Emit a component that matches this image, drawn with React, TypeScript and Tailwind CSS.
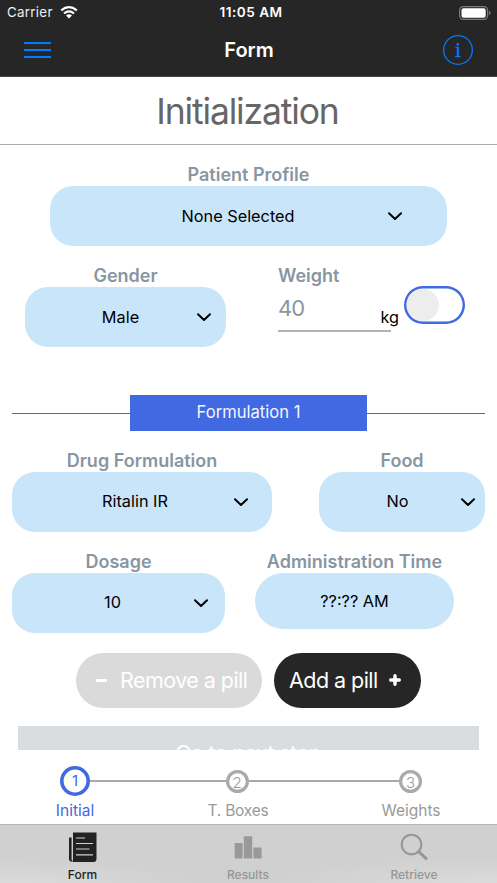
import type { ReactNode } from "react";

function Chevron({ className }: { className: string }) {
  return (
    <svg className={`absolute h-2 w-[14px] ${className}`} viewBox="0 0 14 8" fill="none" stroke="#000" strokeWidth="2" strokeLinecap="round" strokeLinejoin="round">
      <path d="M1 1.2 L7 6.9 L13 1.2" />
    </svg>
  );
}

function Label({ children }: { children: ReactNode }) {
  return <div className="h-[25px] whitespace-nowrap text-center text-[18px] leading-[27px] font-semibold text-[#8896a2]">{children}</div>;
}

function Select({ value, width, pad, chevron, leading = "leading-[60px]" }: { value: string; width: string; pad: string; chevron: string; leading?: string }) {
  return (
    <div className={`relative h-[60px] rounded-[23px] bg-[#c9e5fa] text-center text-[16.3px] text-black ${leading} ${width} ${pad}`}>
      {value}
      <Chevron className={`top-[26px] ${chevron}`} />
    </div>
  );
}

function StatusBar() {
  return (
    <div className="flex h-[25px] items-center justify-between pl-[7px] pr-[6px]">
      <div className="flex w-[90px] items-center gap-[7px] text-[13.3px] text-[#f0f0f0]">
        <span className="tracking-[0.3px]">Carrier</span>
        <svg className="h-[13px] w-[18px]" viewBox="0 0 18 13" fill="none" stroke="#fff" strokeWidth="2.2">
          <path d="M1.2 4.4 Q9 -2 16.8 4.4" />
          <path d="M4 7.5 Q9 3.3 14 7.5" />
          <path d="M6 9.5 Q9 7.1 12 9.5 L9 12.6 Z" fill="#fff" stroke="none" />
        </svg>
      </div>
      <div className="pl-1 text-[13.6px] font-semibold tracking-[0.5px] text-white">11:05 AM</div>
      <div className="flex w-[90px] justify-end">
        <svg className="h-[14px] w-8" viewBox="0 0 32 14">
          <rect x="0.6" y="0.6" width="28" height="12.8" rx="3.6" fill="none" stroke="#7b7b7b" strokeWidth="1.2" />
          <rect x="2.5" y="2.3" width="24.2" height="9.4" rx="2" fill="#fff" />
          <path d="M30 4.8 Q31.6 5.4 31.6 7 Q31.6 8.6 30 9.2 Z" fill="#7b7b7b" />
        </svg>
      </div>
    </div>
  );
}

function NavBar() {
  return (
    <div className="flex h-[50px] items-center justify-between pl-6 pr-6">
      <div className="flex w-[27px] flex-col gap-[5px]">
        <div className="h-[2px] bg-[#007aff]" />
        <div className="h-[2px] bg-[#007aff]" />
        <div className="h-[2px] bg-[#007aff]" />
      </div>
      <div className="pl-1 text-[20px] font-semibold text-white">Form</div>
      <div className="flex h-[30px] w-[30px] items-center justify-center rounded-full font-['Liberation_Serif',serif] text-[22px] leading-none text-[#007aff] shadow-[inset_0_0_0_1.3px_#007aff] [-webkit-text-stroke:0.3px_#007aff]">
        i
      </div>
    </div>
  );
}

function Stepper() {
  return (
    <div className="h-[74px] bg-white pt-4">
      <div className="flex h-[30px] items-center pl-[60px]">
        <div className="flex h-[30px] w-[30px] items-center justify-center rounded-full text-[15px] text-[#4169e1] shadow-[inset_0_0_0_3.6px_#4169e1]">1</div>
        <div className="h-[2px] w-[135.5px] bg-[#aaa]" />
        <div className="flex h-[23px] w-[23px] items-center justify-center rounded-full pt-[4px] text-[15px] font-light tracking-[-0.3px] text-[#999] shadow-[inset_0_0_0_3.2px_#aaa]">2</div>
        <div className="h-[2px] w-[150.5px] bg-[#aaa]" />
        <div className="flex h-[23px] w-[23px] items-center justify-center rounded-full pt-[4px] text-[15px] font-light tracking-[-0.3px] text-[#999] shadow-[inset_0_0_0_3.2px_#aaa]">3</div>
      </div>
      <div className="flex whitespace-nowrap text-center text-[15.5px] leading-[30px] text-[#999]">
        <div className="w-[150px] text-[#4169e1]">Initial</div>
        <div className="w-[176px] tracking-[-0.2px]">T. Boxes</div>
        <div className="w-[170px]">Weights</div>
      </div>
    </div>
  );
}

function TabBar() {
  return (
    <div className="flex h-[59px] border-t border-[#b5b5b5] bg-[#d0d0d0] bg-[radial-gradient(ellipse_at_bottom_left,#dbdbdb,transparent_28%),radial-gradient(ellipse_at_bottom_right,#dbdbdb,transparent_32%)] text-center text-[12px] leading-4 font-medium text-[#969696]">
      <div className="flex w-[165px] flex-col items-center pt-[7px] text-[#222]">
        <svg className="h-[30px] w-7 shrink-0" viewBox="0 0 28 30">
          <path d="M0 5.5 H2.6 V27 Q2.6 28 3.3 29.8 Q0 29.8 0 27 Z M4 0.5 H27.5 V27 Q27.5 29.9 24.6 29.9 H3.5 Q4 28 4 26 Z" fill="#222" />
          <path d="M7 6 H16 M7 11.5 H24 M7 17 H20.5 M7 22.8 H24" stroke="#d0d0d0" strokeWidth="1.2" />
        </svg>
        <span className="mt-[5px]">Form</span>
      </div>
      <div className="flex w-[166px] flex-col items-center pt-[7px]">
        <svg className="h-[30px] w-7 shrink-0" viewBox="0 0 28 30" fill="#999">
          <path d="M0.6 11 H8.6 V26.6 H0.6 Z M9.8 4.2 H18.2 V26.6 H9.8 Z M19.4 15.4 H27.6 V26.6 H19.4 Z" />
        </svg>
        <span className="mt-[5px]">Results</span>
      </div>
      <div className="flex w-[166px] flex-col items-center pt-[7px]">
        <svg className="h-[30px] w-7 shrink-0" viewBox="0 0 28 30" fill="none" stroke="#969696">
          <circle cx="11.5" cy="12.5" r="9.8" strokeWidth="2" />
          <path d="M18.4 19.4 L27 27.4" strokeWidth="2.8" />
        </svg>
        <span className="mt-[5px]">Retrieve</span>
      </div>
    </div>
  );
}

export default function App() {
  return (
    <div className="flex h-[883px] w-[497px] flex-col overflow-hidden bg-white font-['Inter',sans-serif] text-black">
      <header className="h-[77px] border-b border-[#454545] bg-[#262626]">
        <StatusBar />
        <NavBar />
      </header>
      <h1 className="h-[68px] border-b border-[#aaa] pr-[2px] text-center text-[35.5px] leading-[69px] font-normal tracking-[-1.15px] text-[#666]">Initialization</h1>

      <main className="h-[605px] overflow-hidden">
        <section className="mt-4 ml-[50px] w-[397px]">
          <Label>Patient Profile</Label>
          <Select value="None Selected" width="w-[397px]" pad="pr-[21px]" chevron="right-[45px]" />
        </section>

        <div className="mt-4 flex h-[85px] pl-[25px]">
          <section className="w-[201px]">
            <Label>Gender</Label>
            <Select value="Male" width="w-[201px]" pad="pr-[10px]" chevron="right-[15px]" />
          </section>
          <section className="ml-[52px] w-[113px]">
            <div className="flex">
              <Label>Weight</Label>
            </div>
            <div className="flex h-[45px] border-b-2 border-[#b2b2b2] text-[22px] leading-[43px] text-[#8896a2]">
              <span className="tracking-[-1px]">40</span>
              <span className="-mr-2 ml-auto pt-[9px] text-[16.3px] text-black">kg</span>
            </div>
          </section>
          <div className="mt-6 ml-[13px] flex h-[38px] w-[61px] items-center rounded-[19px] pl-[3px] shadow-[inset_0_0_0_2.4px_#4169e1]">
            <div className="h-[32px] w-[32px] rounded-full bg-[#ededed]" />
          </div>
        </div>

        <div className="mx-3 mt-[47.5px] flex items-center">
          <div className="mt-px h-px flex-1 bg-[#4169e1]" />
          <div className="h-9 w-[237px] bg-[#4169e1] text-center text-[16.6px] leading-[35px] text-[#f4f6fd]">Formulation 1</div>
          <div className="mt-px h-px flex-1 bg-[#4169e1]" />
        </div>

        <div className="mx-3 mt-4 flex justify-between">
          <section>
            <Label>Drug Formulation</Label>
            <Select value="Ritalin IR" width="w-[260px]" pad="pr-[14px]" chevron="right-[24px]" leading="leading-[59px]" />
          </section>
          <section>
            <Label>Food</Label>
            <Select value="No" width="w-[166px]" pad="pr-[9px]" chevron="right-[10px]" leading="leading-[59px]" />
          </section>
        </div>

        <div className="mt-[16.5px] flex gap-[30px] pl-3">
          <section>
            <Label>Dosage</Label>
            <Select value="10" width="w-[213px]" pad="pr-[12px]" chevron="right-[17px]" leading="leading-[59px]" />
          </section>
          <section>
            <Label>Administration Time</Label>
            <div className="h-14 w-[199px] rounded-full bg-[#c9e5fa] text-center text-[16.3px] leading-[56px]">??:?? AM</div>
          </section>
        </div>

        <div className="mt-5 flex gap-3 pl-[76px] text-[21.5px] tracking-[-0.55px] text-white">
          <button className="flex h-[55px] w-[186px] items-center rounded-full bg-[#dadada] pl-5">
            <span className="-mt-px h-[3px] w-[11px] bg-white" />
            <span className="ml-[13px] whitespace-nowrap">Remove a pill</span>
          </button>
          <button className="flex h-[55px] w-[147px] items-center rounded-full bg-[#262626] pl-[15px]">
            <span className="whitespace-nowrap">Add a pill</span>
            <svg className="-mt-[2px] ml-[11px] h-3 w-3" viewBox="0 0 12 12" stroke="#fff" strokeWidth="3.4" strokeLinecap="round">
              <path d="M1.7 6 H10.3 M6 1.7 V10.3" />
            </svg>
          </button>
        </div>

        <div className="mx-[18px] mt-[17.5px] h-6 overflow-hidden bg-[#d9dde0] pr-px text-center text-[21.5px] leading-[54px] tracking-[-0.6px] text-white">Go to next step</div>
      </main>

      <Stepper />
      <TabBar />
    </div>
  );
}
